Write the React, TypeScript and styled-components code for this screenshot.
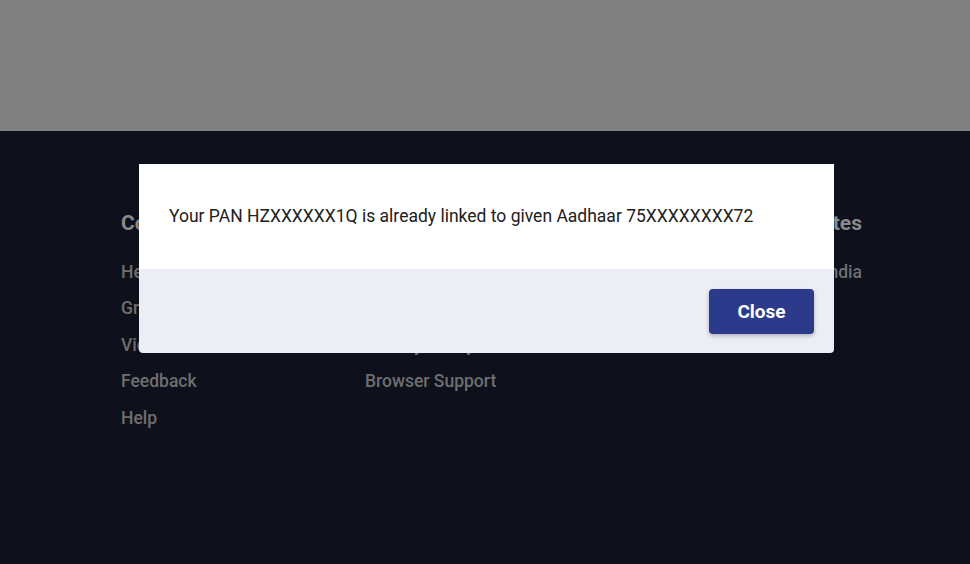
import React from "react";
import styled, { createGlobalStyle } from "styled-components";

const GlobalStyle = createGlobalStyle`
  html, body { margin: 0; padding: 0; }
  body {
    width: 970px;
    height: 564px;
    overflow: hidden;
    font-family: Roboto, "Liberation Sans", Arial, sans-serif;
    background: #808080;
  }
  * { box-sizing: border-box; }
`;

const Page = styled.div`
  display: flex;
  flex-direction: column;
  width: 970px;
  height: 564px;
`;

const TopArea = styled.div`
  height: 131px;
  background: #808080;
`;

const Footer = styled.footer`
  flex: 1;
  background: #0e101c;
  padding: 75px 0 0 121px;
`;

const Columns = styled.div`
  display: grid;
  width: 741px;
  grid-template-columns: 244px 244px 1fr auto;
`;

const Column = styled.div<{ $end?: boolean }>`
  display: flex;
  flex-direction: column;
  align-items: ${(p) => (p.$end ? "flex-end" : "flex-start")};
`;

const Heading = styled.h3`
  margin: 0 0 14px;
  font-size: 21px;
  line-height: 34px;
  font-weight: 700;
  color: #8a8a8a;
  white-space: nowrap;
`;

const LinkItem = styled.a`
  font-size: 17.5px;
  line-height: 36.4px;
  font-weight: 500;
  color: #6e6e6e;
  text-decoration: none;
  white-space: nowrap;
`;

const Modal = styled.div`
  position: absolute;
  top: 164px;
  left: 139px;
  width: 695px;
  background: #ededf5;
  border-radius: 0 0 4px 4px;
  overflow: hidden;
  display: flex;
  flex-direction: column;
`;

const ModalBody = styled.div`
  background: #ffffff;
  padding: 40px 30px 41px;
  font-size: 17.5px;
  line-height: 24px;
  color: #212121;
  white-space: nowrap;
`;

const ModalFooter = styled.div`
  display: flex;
  justify-content: flex-end;
  padding: 20px 20px 19px;
`;

const Button = styled.button`
  width: 105px;
  height: 45px;
  border: none;
  border-radius: 4px;
  background: #2b3a8b;
  color: #ffffff;
  font-family: Roboto, "Liberation Sans", Arial, sans-serif;
  font-size: 19px;
  font-weight: 700;
  box-shadow: 0 2px 4px rgba(0, 0, 0, 0.25);
  cursor: pointer;
`;

const columns = [
  { title: "Contact Us", links: ["Help desk", "Grievances", "View Grievance", "Feedback", "Help"] },
  { title: "Using the Portal", links: ["Website Policies", "Site Map", "Privacy Policy", "Browser Support"] },
  { title: "", links: [] },
  { title: "Related Sites", links: ["Income Tax India"], end: true },
];

export default function App() {
  return (
    <>
      <GlobalStyle />
      <Page>
        <TopArea />
        <Footer>
          <Columns>
            {columns.map((c, i) => (
              <Column key={i} $end={c.end}>
                <Heading>{c.title || "\u00a0"}</Heading>
                {c.links.map((l) => (
                  <LinkItem key={l} href="#">{l}</LinkItem>
                ))}
              </Column>
            ))}
          </Columns>
        </Footer>
      </Page>
      <Modal role="dialog">
        <ModalBody>
          Your PAN HZXXXXXX1Q is already linked to given Aadhaar 75XXXXXXXX72
        </ModalBody>
        <ModalFooter>
          <Button>Close</Button>
        </ModalFooter>
      </Modal>
    </>
  );
}
